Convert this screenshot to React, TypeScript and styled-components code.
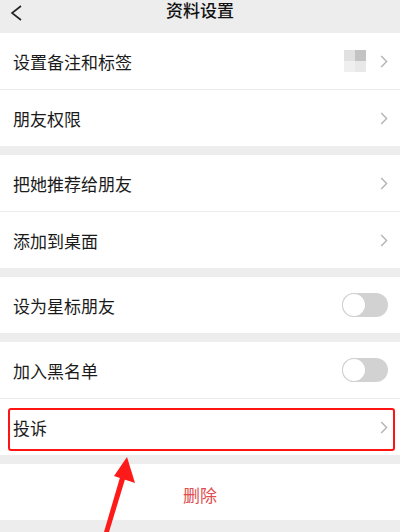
import React from 'react';
import styled, { createGlobalStyle } from 'styled-components';

const GlobalStyle = createGlobalStyle`
  html, body {
    margin: 0;
    padding: 0;
    background: #ededed;
    font-family: "Noto Sans CJK SC", "Noto Sans", sans-serif;
    -webkit-font-smoothing: antialiased;
  }
`;

const Page = styled.div`
  position: relative;
  width: 400px;
  height: 532px;
  overflow: hidden;
  background: #ededed;
  display: flex;
  flex-direction: column;
`;

const Header = styled.div`
  height: 33px;
  flex-shrink: 0;
  display: grid;
  grid-template-columns: 40px 1fr 40px;
  align-items: start;
  background: #ededed;
`;

const BackButton = styled.div`
  padding: 2px 0 0 10px;
  height: 18px;
`;

const Title = styled.div`
  text-align: center;
  font-size: 17px;
  font-weight: 500;
  line-height: 18px;
  padding-top: 1px;
  color: #111;
`;

const Group = styled.div`
  background: #fff;
  margin-bottom: 9px;
`;

const Row = styled.div<{ $divider?: boolean; $marked?: boolean }>`
  position: relative;
  height: 56px;
  display: flex;
  align-items: center;
  padding: 0 12px 0 13px;
  font-size: 17px;
  color: #1a1a1a;
  ${(p) => (p.$divider ? 'border-bottom: 1px solid #ececec;' : '')}
  ${(p) =>
    p.$marked
      ? `&::after {
    content: '';
    position: absolute;
    left: 8px;
    right: 5px;
    top: 9px;
    bottom: 4px;
    border: 2px solid #ff1414;
    border-radius: 3px;
    pointer-events: none;
  }`
      : ''}
`;

const Label = styled.span`
  flex: 1;
  line-height: 20px;
  padding-top: 2px;
`;

const Avatar = styled.div`
  width: 22px;
  height: 22px;
  display: grid;
  grid-template-columns: 1fr 1fr;
  grid-template-rows: 1fr 1fr;
  margin-right: 14px;
`;

const Tile = styled.div<{ $c: string }>`
  background: ${(p) => p.$c};
`;

const Switch = styled.div`
  position: relative;
  width: 46px;
  height: 24px;
  border-radius: 12px;
  background: #d2d2d2;
  box-sizing: border-box;
`;

const Knob = styled.div`
  position: absolute;
  left: 1px;
  top: 1px;
  width: 22px;
  height: 22px;
  border-radius: 50%;
  background: #fff;
  box-shadow: 0 0 0 1px #d0d0d0;
`;

const DeleteRow = styled.div`
  height: 56px;
  display: flex;
  align-items: center;
  justify-content: center;
  font-size: 17px;
  color: #e04d4e;
  padding-top: 4px;
  box-sizing: border-box;
`;

const Arrow = styled.svg`
  position: absolute;
  left: 90px;
  top: 450px;
  pointer-events: none;
`;

const Chevron = () => (
  <svg width="8" height="13" viewBox="0 0 8 13">
    <path d="M1.2 1 L6.6 6.5 L1.2 12" fill="none" stroke="#b3b3b3" strokeWidth="1.4" />
  </svg>
);

const Toggle = () => (
  <Switch>
    <Knob />
  </Switch>
);

export default function App() {
  return (
    <Page>
      <GlobalStyle />
      <Header>
        <BackButton>
          <svg width="14" height="16" viewBox="0 0 14 16">
            <path d="M11 1 L2 8 L11 15" fill="none" stroke="#222" strokeWidth="1.6" />
          </svg>
        </BackButton>
        <Title>资料设置</Title>
        <div />
      </Header>

      <Group>
        <Row $divider>
          <Label>设置备注和标签</Label>
          <Avatar>
            <Tile $c="#e1e1e1" />
            <Tile $c="#c3c3c3" />
            <Tile $c="#efefef" />
            <Tile $c="#e8e8e8" />
          </Avatar>
          <Chevron />
        </Row>
        <Row>
          <Label>朋友权限</Label>
          <Chevron />
        </Row>
      </Group>

      <Group>
        <Row $divider>
          <Label>把她推荐给朋友</Label>
          <Chevron />
        </Row>
        <Row>
          <Label>添加到桌面</Label>
          <Chevron />
        </Row>
      </Group>

      <Group>
        <Row>
          <Label>设为星标朋友</Label>
          <Toggle />
        </Row>
      </Group>

      <Group>
        <Row $divider>
          <Label>加入黑名单</Label>
          <Toggle />
        </Row>
        <Row $marked>
          <Label>投诉</Label>
          <Chevron />
        </Row>
      </Group>

      <Group>
        <DeleteRow>删除</DeleteRow>
      </Group>

      <Arrow width="60" height="82" viewBox="0 0 60 82">
        <path d="M14 82 L31 24 L36 26 L19 82 Z" fill="#ff1a1a" />
        <path d="M37 7 L45 33 L24 26 Z" fill="#ff1a1a" />
      </Arrow>
    </Page>
  );
}
